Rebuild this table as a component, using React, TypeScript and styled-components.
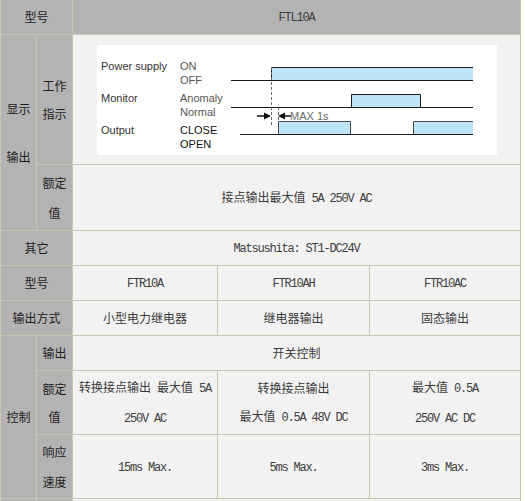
import React from "react";
import styled, { createGlobalStyle } from "styled-components";

const Global = createGlobalStyle`
  html, body {
    margin: 0;
    padding: 0;
    background: #ffffff;
    overflow: hidden;
  }
  body {
    font-family: "Noto Sans CJK SC", sans-serif;
  }
`;

const Table = styled.table`
  border-collapse: separate;
  border-spacing: 1px;
  background: #c8c6b2;
  table-layout: fixed;
  width: 521px;
  margin-top: -1px;
  font-size: 12px;
`;

const Col = styled.col<{ $w: number }>`
  width: ${(p) => p.$w}px;
`;

const Row = styled.tr<{ $h: number }>`
  height: ${(p) => p.$h}px;
`;

const Label = styled.td<{ $lh?: number }>`
  padding: 0;
  background: #b3b3b3;
  color: #1e1e1e;
  text-align: center;
  vertical-align: middle;
  font-family: "Noto Sans CJK SC", sans-serif;
  font-size: 12px;
  line-height: ${(p) => p.$lh ?? 16}px;
`;

const Body = styled.td<{ $tone?: "grey" | "light"; $lh?: number }>`
  padding: 0;
  background: ${(p) => (p.$tone === "grey" ? "#b3b3b3" : "#f2f2f2")};
  color: #3a3a3a;
  text-align: center;
  vertical-align: middle;
  font-family: "Noto Sans CJK SC", sans-serif;
  font-size: 12px;
  line-height: ${(p) => p.$lh ?? 16}px;
`;

const DiagramCell = styled.td`
  padding: 10px 0 0 24px;
  background: #f2f2f2;
  vertical-align: top;
`;

const Panel = styled.div`
  width: 400px;
  height: 110px;
  background: #ffffff;
`;

const Latin = styled.span`
  font-family: "Liberation Mono", monospace;
  font-size: 12px;
  letter-spacing: -1.2px;
  color: #404040;
`;

const Svg = styled.svg`
  display: block;
  font-family: "Liberation Sans", Arial, sans-serif;
  font-size: 11px;
`;

const BLUE = "#bce3f6";

function TimingDiagram() {
  return (
    <Panel>
      <Svg width={400} height={110} viewBox="0 0 400 110">
        <g fill="#333">
          <text x={4} y={25}>Power supply</text>
          <text x={4} y={57}>Monitor</text>
          <text x={4} y={89}>Output</text>
        </g>
        <g fill="#555">
          <text x={83} y={25}>ON</text>
          <text x={83} y={39}>OFF</text>
          <text x={83} y={57}>Anomaly</text>
          <text x={83} y={71}>Normal</text>
        </g>
        <g fill="#111">
          <text x={83} y={89}>CLOSE</text>
          <text x={83} y={103}>OPEN</text>
        </g>

        {/* power supply */}
        <rect x={174} y={22} width={202} height={13} fill={BLUE} />
        <path d="M174.5 35 V22.5 H376" stroke="#1a1a1a" fill="none" />
        <path d="M134 35.5 H376" stroke="#1a1a1a" />

        {/* monitor */}
        <rect x={254} y={49} width={70} height={13} fill={BLUE} />
        <path d="M254.5 62 V49.5 H323.5 V62" stroke="#1a1a1a" fill="none" />
        <path d="M134 62.5 H376" stroke="#1a1a1a" />

        {/* output */}
        <rect x={181} y={76} width={73} height={13} fill={BLUE} />
        <path d="M181.5 89 V76.5 H253.5 V89" stroke="#4a4a4a" fill="none" />
        <rect x={316} y={76} width={60} height={13} fill={BLUE} />
        <path d="M316.5 89 V76.5 H376" stroke="#4a4a4a" fill="none" />
        <path d="M143 89.5 H376" stroke="#1a1a1a" />

        {/* dashed markers */}
        <path d="M174.5 22 V80" stroke="#666" strokeDasharray="3 2" />
        <path d="M181.5 62 V76" stroke="#666" strokeDasharray="3 2" />

        {/* arrows */}
        <path d="M160 71 H168" stroke="#111" strokeWidth={1.5} />
        <path d="M167 67.5 L174 71 L167 74.5 Z" fill="#111" />
        <path d="M181 71 L188 67.5 L188 74.5 Z" fill="#111" />
        <path d="M187 71 H194" stroke="#111" strokeWidth={1.5} />
        <text x={193} y={75} fill="#6a6a6a">MAX 1s</text>
      </Svg>
    </Panel>
  );
}

export default function App() {
  return (
    <>
      <Global />
      <Table>
        <colgroup>
          <Col $w={35} />
          <Col $w={35} />
          <Col $w={144} />
          <Col $w={151} />
          <Col $w={150} />
        </colgroup>
        <tbody>
          <Row $h={34}>
            <Label colSpan={2}>型号</Label>
            <Body colSpan={3} $tone="grey">
              <Latin>FTL10A</Latin>
            </Body>
          </Row>
          <Row $h={129}>
            <Label rowSpan={2} $lh={24}>
              显示
              <br />
              <br />
              输出
            </Label>
            <Label $lh={28}>
              工作
              <br />
              指示
            </Label>
            <DiagramCell colSpan={3}>
              <TimingDiagram />
            </DiagramCell>
          </Row>
          <Row $h={65}>
            <Label $lh={30}>
              额定
              <br />
              值
            </Label>
            <Body colSpan={3}>
              接点输出最大值<Latin> 5A 250V AC</Latin>
            </Body>
          </Row>
          <Row $h={34}>
            <Label colSpan={2}>其它</Label>
            <Body colSpan={3}>
              <Latin>Matsushita: ST1-DC24V</Latin>
            </Body>
          </Row>
          <Row $h={34}>
            <Label colSpan={2}>型号</Label>
            <Body>
              <Latin>FTR10A</Latin>
            </Body>
            <Body>
              <Latin>FTR10AH</Latin>
            </Body>
            <Body>
              <Latin>FTR10AC</Latin>
            </Body>
          </Row>
          <Row $h={34}>
            <Label colSpan={2}>输出方式</Label>
            <Body>小型电力继电器</Body>
            <Body>继电器输出</Body>
            <Body>固态输出</Body>
          </Row>
          <Row $h={34}>
            <Label rowSpan={3}>控制</Label>
            <Label>输出</Label>
            <Body colSpan={3}>开关控制</Body>
          </Row>
          <Row $h={63}>
            <Label $lh={28}>
              额定
              <br />
              值
            </Label>
            <Body $lh={28}>
              转换接点输出<Latin> </Latin>最大值<Latin> 5A</Latin>
              <br />
              <Latin>250V AC</Latin>
            </Body>
            <Body $lh={28}>
              转换接点输出
              <br />
              最大值<Latin> 0.5A 48V DC</Latin>
            </Body>
            <Body $lh={28}>
              最大值<Latin> 0.5A</Latin>
              <br />
              <Latin>250V AC DC</Latin>
            </Body>
          </Row>
          <Row $h={63}>
            <Label $lh={30}>
              响应
              <br />
              速度
            </Label>
            <Body>
              <Latin>15ms Max.</Latin>
            </Body>
            <Body>
              <Latin>5ms Max.</Latin>
            </Body>
            <Body>
              <Latin>3ms Max.</Latin>
            </Body>
          </Row>
          <Row $h={2}>
            <Label />
            <Label />
            <Body colSpan={3} />
          </Row>
        </tbody>
      </Table>
    </>
  );
}
